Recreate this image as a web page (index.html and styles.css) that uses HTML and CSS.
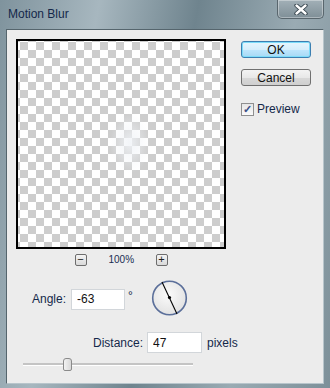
FILE: index.html
```html
<!DOCTYPE html>
<html lang="en">
<head>
  <meta charset="UTF-8">
  <title>Motion Blur</title>
  <link rel="stylesheet" href="styles.css">
</head>
<body>
  <div class="window">
    <div class="titlebar">
      <span class="title">Motion Blur</span>
      <div class="close">
        <svg width="14" height="11" viewBox="0 0 14 11">
          <path d="M2.5 1.5 L11.5 9.5 M11.5 1.5 L2.5 9.5" stroke="#2f3d46" stroke-width="4.2" stroke-linecap="round"/>
          <path d="M2.5 1.5 L11.5 9.5 M11.5 1.5 L2.5 9.5" stroke="#fff" stroke-width="2.4" stroke-linecap="round"/>
        </svg>
      </div>
    </div>
    <div class="client">
      <div class="top">
        <div class="preview-wrap">
          <div class="preview"><div class="blob"></div></div>
          <div class="zoom">
            <span class="zbtn">&minus;</span>
            <span class="pct">100%</span>
            <span class="zbtn">+</span>
          </div>
        </div>
        <div class="side">
          <button class="btn ok">OK</button>
          <button class="btn">Cancel</button>
          <label class="check"><span class="box">&#x2713;</span>Preview</label>
        </div>
      </div>

      <div class="row angle">
        <span class="lbl">Angle:</span>
        <input class="field" type="text" value="-63">
        <span class="deg">&deg;</span>
        <svg class="dial" width="37" height="36" viewBox="0 0 37 36">
          <defs>
            <radialGradient id="dg" cx="0.45" cy="0.4" r="0.6">
              <stop offset="0" stop-color="#fbfbfb"/>
              <stop offset="1" stop-color="#e2e2e2"/>
            </radialGradient>
          </defs>
          <circle cx="18.5" cy="18" r="16.8" fill="url(#dg)" stroke="#5b6f9a" stroke-width="1.6"/>
          <line x1="11" y1="2" x2="26" y2="34" stroke="#000" stroke-width="1.1"/>
          <circle cx="18.5" cy="17.5" r="1.6" fill="#000"/>
        </svg>
      </div>

      <div class="row distance">
        <span class="lbl">Distance:</span>
        <input class="field" type="text" value="47">
        <span class="unit">pixels</span>
      </div>

      <div class="slider">
        <div class="track"></div>
        <div class="thumb"></div>
      </div>
    </div>
  </div>
</body>
</html>
```

FILE: styles.css
```css
body { margin: 0; font-family: "Liberation Sans", Arial, sans-serif; font-size: 12px; }

.window {
  width: 330px; height: 388px; box-sizing: border-box;
  padding: 0 7px 5px 7px;
  background: linear-gradient(100deg, #7f939d 0%, #a7b7bf 25%, #6f848e 50%, #9aabb3 75%, #7d9099 100%);
  display: flex; flex-direction: column;
}

.titlebar { height: 29px; display: flex; align-items: flex-start; position: relative; }
.title { margin: 7px 0 0 1px; color: #14284a; font-size: 12px; }
.close {
  position: absolute; right: -1px; top: 0; width: 45px; height: 18px;
  border: 1px solid #59666d; border-top: none; border-radius: 0 0 5px 5px;
  background: linear-gradient(#a2b0b7, #7f8f97);
  box-shadow: inset 0 0 0 1px rgba(255,255,255,0.35);
  display: flex; align-items: center; justify-content: center;
}

.client {
  flex: 1; background: #ececec;
  border: 1px solid #5f6f77; border-color: #55656d #b8c5cb #b8c5cb #55656d;
  margin: 0 -1px -1px -1px;
  padding: 9px 0 0 9px;
}

.top { display: flex; gap: 15px; }

.preview {
  width: 206px; height: 206px; border: 2px solid #000; position: relative;
  background-color: #fff;
  background-image:
    linear-gradient(45deg, #cdcdcd 25%, transparent 25%, transparent 75%, #cdcdcd 75%),
    linear-gradient(45deg, #cdcdcd 25%, transparent 25%, transparent 75%, #cdcdcd 75%);
  background-size: 16px 16px;
  background-position: 2px 9px, 10px 1px;
}
.blob {
  position: absolute; left: 92px; top: 72px; width: 40px; height: 60px;
  background: radial-gradient(closest-side, rgba(240,243,247,0.85), rgba(240,243,247,0));
}

.zoom { width: 210px; display: flex; justify-content: center; align-items: center; gap: 22px; margin-top: 4px; height: 13px; }
.zbtn {
  width: 10px; height: 10px; border: 1px solid #6d6d6d; border-radius: 2px;
  background: linear-gradient(#f4f4f4, #d9d9d9);
  font-size: 11px; line-height: 9px; text-align: center; color: #222;
}
.pct { width: 25px; font-size: 10px; color: #1a2d52; text-align: center; }

.side { display: flex; flex-direction: column; width: 70px; padding-top: 2px; }
.btn {
  width: 70px; height: 17px; padding: 0; margin-bottom: 11px;
  font-family: inherit; font-size: 12px; color: #111;
  border: 1px solid #707070; border-radius: 3px;
  background: linear-gradient(#f3f3f3 0%, #e8e8e8 50%, #d8d8d8 51%, #cfcfcf 100%);
}
.btn.ok {
  border-color: #3c7fb1;
  background: linear-gradient(#e8f6fd 0%, #d6eefb 50%, #bee6fd 51%, #a7d9f5 100%);
  box-shadow: inset 0 0 0 1px #7ddcf9;
}
.check { display: flex; align-items: center; gap: 3px; margin-top: 5px; color: #14284a; }
.box {
  width: 11px; height: 11px; border: 1px solid #8f8f8f; background: linear-gradient(#e6e6e6, #fafafa);
  font-size: 11px; line-height: 11px; text-align: center; color: #3a4f86; font-weight: bold;
}

.row { display: flex; align-items: center; }
.lbl { color: #14284a; }
.field {
  box-sizing: border-box; height: 21px; border: 1px solid #d2d6da; background: #fff;
  font-family: inherit; font-size: 12px; color: #111; padding: 0 0 0 5px; outline: none;
}
.angle { margin-top: 15px; padding-left: 16px; height: 36px; }
.angle .field { width: 54px; margin-left: 5px; }
.deg { margin: -6px 0 0 3px; align-self: center; color: #14284a; }
.dial { margin-left: 18px; margin-top: -2px; }

.distance { margin-top: 15px; padding-left: 77px; }
.distance .field { width: 55px; margin-left: 4px; }
.unit { margin-left: 5px; color: #14284a; }

.slider { position: relative; margin: 5px 0 0 7px; width: 170px; height: 13px; }
.track { position: absolute; left: 0; right: 0; top: 5px; height: 2px; background: #c4c4c4; border-bottom: 1px solid #fff; }
.thumb {
  position: absolute; left: 40px; top: 0; width: 7px; height: 11px;
  border: 1px solid #8a8a8a; border-radius: 3px 3px 2px 2px;
  background: linear-gradient(90deg, #f2f2f2, #d8d8d8);
}
```
